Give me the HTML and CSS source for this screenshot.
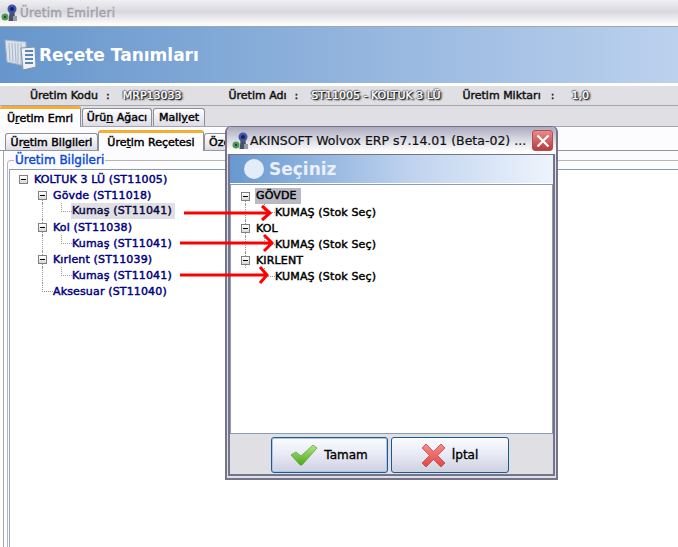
FILE: index.html
```html
<!DOCTYPE html>
<html lang="tr">
<head>
<meta charset="utf-8">
<title>Reçete Tanımları</title>
<link rel="stylesheet" href="styles.css">
</head>
<body>
<div class="window">
  <header class="titlebar">
    <svg class="app-icon" width="18" height="18" viewBox="0 0 18 18"><circle cx="11" cy="5" r="4.5" fill="#3d55b0"/><circle cx="11" cy="5" r="2" fill="#1d2440"/><path d="M8.500 9h5l1 8h-7z" fill="#4c5266"/><circle cx="4" cy="13" r="3.500" fill="#4f9a55"/><circle cx="4" cy="13" r="1.200" fill="#1e4a25"/><rect x="12" y="12" width="4" height="5" fill="#9a9aa8"/></svg>
    <span class="titlebar-text">Üretim Emirleri</span>
  </header>
  <section class="banner">
    <svg class="banner-icon" width="33" height="32" viewBox="0 0 33 32"><path d="M1 1l21 2v24L3 23z" fill="#dbe2ec" stroke="#a4b2c6"/><path d="M5 4l1 18M8 4l1 19M11 4l1 20M14 4v21M17 4v22" stroke="#aab6c8" fill="none"/><path d="M17 9l14-1 1 20-13 3z" fill="#eef1f5" stroke="#8490a0"/><path d="M21 12h8M21 16h8M21 20h8M21 24h8" stroke="#5d86ad" stroke-width="2"/></svg>
    <h1 class="banner-title">Reçete Tanımları</h1>
  </section>
  <section class="infobar">
    <span class="info-label info-a">Üretim Kodu</span><span class="info-colon">:</span><span class="info-value info-b">MRP13033</span>
    <span class="info-label info-c">Üretim Adı</span><span class="info-colon">:</span><span class="info-value info-d">ST11005 - KOLTUK 3 LÜ</span>
    <span class="info-label info-e">Üretim Miktarı</span><span class="info-colon info-colon-wide">:</span><span class="info-value info-f">1,0</span>
  </section>
  <nav class="tabs-main">
    <span class="tab tab-active tab-m1"><span>Ü<u>r</u>etim Emri</span></span>
    <span class="tab tab-m2"><span>Ürü<u>n</u> Ağacı</span></span>
    <span class="tab tab-m3"><span>Mali<u>y</u>et</span></span>
  </nav>
  <main class="page">
    <nav class="tabs-sub">
      <span class="tab tab-s1"><span>Ür<u>e</u>tim Bilgileri</span></span>
      <span class="tab tab-active tab-s2"><span>Üre<u>t</u>im Reçetesi</span></span>
      <span class="tab tab-s3"><span>Özel</span></span>
    </nav>
    <section class="panel">
      <div class="group">
        <span class="legend">Üretim Bilgileri</span>
        <div class="tree">
          <div class="row lvl0"><span class="box"></span><span class="navy">KOLTUK 3 LÜ (ST11005)</span></div>
          <div class="row lvl1"><span class="box"></span><span class="navy">Gövde (ST11018)</span></div>
          <div class="row lvl2"><span class="navy sel">Kumaş (ST11041)</span></div>
          <div class="row lvl1"><span class="box"></span><span class="navy">Kol (ST11038)</span></div>
          <div class="row lvl2"><span class="navy">Kumaş (ST11041)</span></div>
          <div class="row lvl1"><span class="box"></span><span class="navy">Kırlent (ST11039)</span></div>
          <div class="row lvl2"><span class="navy">Kumaş (ST11041)</span></div>
          <div class="row lvl1b"><span class="navy">Aksesuar (ST11040)</span></div>
        </div>
      </div>
    </section>
  </main>
</div>

<section class="dialog">
  <header class="dlg-title">
    <svg class="app-icon" width="18" height="18" viewBox="0 0 18 18"><circle cx="11" cy="5" r="4.500" fill="#3d55b0"/><circle cx="11" cy="5" r="2" fill="#1d2440"/><path d="M8.500 9h5l1 8h-7z" fill="#4c5266"/><circle cx="4" cy="13" r="3.500" fill="#4f9a55"/><circle cx="4" cy="13" r="1.200" fill="#1e4a25"/><rect x="12" y="12" width="4" height="5" fill="#9a9aa8"/></svg>
    <span class="dlg-title-text">AKINSOFT Wolvox ERP s7.14.01 (Beta-02) ...</span>
    <span class="dlg-close"><svg width="14" height="14" viewBox="0 0 14 14"><path d="M1.500 1.500l11 11M12.500 1.500l-11 11" stroke="#fff" stroke-width="2.200"/></svg></span>
  </header>
  <div class="dlg-body">
    <div class="dlg-banner"><span class="dot"></span><span class="dlg-banner-text">Seçiniz</span></div>
    <div class="dlg-tree">
      <div class="row dl0"><span class="box"></span><span class="black sel2">GÖVDE</span></div>
      <div class="row dl1"><span class="black">KUMAŞ (Stok Seç)</span></div>
      <div class="row dl0"><span class="box"></span><span class="black">KOL</span></div>
      <div class="row dl1"><span class="black">KUMAŞ (Stok Seç)</span></div>
      <div class="row dl0"><span class="box"></span><span class="black">KIRLENT</span></div>
      <div class="row dl1 dl1-last"><span class="black">KUMAŞ (Stok Seç)</span></div>
    </div>
    <div class="dlg-actions">
      <button class="btn btn-default"><svg width="28" height="22" viewBox="0 0 28 22"><defs><linearGradient id="chk" x1="0" y1="0" x2="0" y2="1"><stop offset="0" stop-color="#b6e58a"/><stop offset="1" stop-color="#4aa81a"/></linearGradient></defs><path d="M1 11l5-3 5 4L23 1l4 3-15 17h-2z" fill="url(#chk)" stroke="#5fa83a" stroke-width=".8"/></svg><span>Tamam</span></button>
      <button class="btn btn-cancel"><svg width="25" height="25" viewBox="0 0 25 25"><defs><linearGradient id="crs" x1="0" y1="0" x2="0" y2="1"><stop offset="0" stop-color="#f98a8a"/><stop offset="1" stop-color="#e24545"/></linearGradient></defs><path d="M5 1l7.500 7.500L20 1l4 4-7.500 7.500L24 20l-4 4-7.500-7.500L5 24l-4-4 7.500-7.500L1 5z" fill="url(#crs)" stroke="#b84a4a" stroke-width=".8"/></svg><span>İptal</span></button>
    </div>
  </div>
</section>

<svg class="arrows" width="678" height="547" viewBox="0 0 678 547">
  <g fill="none" stroke="#f00" stroke-width="3">
    <path d="M184 213H269M262 206l8 7-8 7"/>
    <path d="M180 243H271M264 235l8 8-8 8"/>
    <path d="M180 275H267M260 267l7 8-7 8"/>
  </g>
</svg>
</body>
</html>
```
FILE: styles.css
```css
* { box-sizing: border-box; }
html, body { margin: 0; padding: 0; background: #fff; }
body { width: 678px; height: 547px; overflow: hidden; position: relative; font-family: "DejaVu Sans", sans-serif; font-size: 11px; color: #000; }
.window { display: flex; flex-direction: column; height: 547px; }

.titlebar { height: 27px; display: flex; align-items: center; gap: 1px; padding-left: 1px; background: linear-gradient(#f0f0f3 0, #d8d8df 45%, #fbfbfc 92%); border-bottom: 1px solid #a5a5ad; }
.titlebar-text { font-size: 12px; letter-spacing: .3px; color: #a0a0a8; -webkit-text-stroke: .4px #a0a0a8; }
.app-icon { flex: none; }

.banner { height: 56px; display: flex; align-items: center; gap: 2px; padding-left: 4px; background: linear-gradient(90deg, #6696cc, #bcd1ee); }
.banner-title { margin: 0; font-size: 17px; font-weight: 700; color: #fff; }

.infobar { height: 23px; border-top: 3px solid #fff; border-bottom: 1px solid #a5a5ad; background: #e0dfe3; display: flex; align-items: center; }
.info-label, .info-colon { color: #111; -webkit-text-stroke: .45px #111; }
.info-colon { margin-left: 8px; }
.info-colon-wide { margin-left: 10px; }
.info-value { color: #fff; -webkit-text-stroke: .4px #fff; text-shadow: 1px 1px 1px #000, 2px 1px 2px #222, -1px 0 1px #333, 0 -1px 1px #444; }
.info-a { margin-left: 30px; }
.info-b { margin-left: 13px; }
.info-c { margin-left: 47px; }
.info-d { margin-left: 13px; }
.info-e { margin-left: 22px; }
.info-f { margin-left: 17px; }

.tabs-main { height: 21px; background: #e0dfe3; border-bottom: 1px solid #a5a5ad; display: flex; align-items: flex-end; gap: 1px; }
.tab { display: flex; align-items: center; justify-content: center; height: 18px; border: 1px solid #8e8f9c; border-bottom: 0; border-radius: 3px 3px 0 0; background: linear-gradient(#fff, #dcdce6); white-space: nowrap; -webkit-text-stroke: .45px #000; }
.tab-active { background: #fdfdff; border-top: 3px solid #f5ad33; position: relative; }
.tab-m1 { width: 81px; height: 21px; margin-bottom: -1px; border-left: 0; }
.tab-m2 { width: 70px; }
.tab-m3 { width: 52px; }

.page { flex: 1; display: flex; flex-direction: column; background: #fff; }
.tabs-sub { height: 24px; display: flex; align-items: flex-end; padding-left: 5px; border-bottom: 1px solid #8f9a9f; background: #fcfcff; }
.tab-s1 { width: 93px; height: 17px; }
.tab-s2 { width: 106px; height: 21px; margin-bottom: -1px; }
.tab-s3 { width: 60px; height: 17px; justify-content: flex-start; padding-left: 4px; }

.panel { flex: 1; margin-left: 3px; border-left: 1px solid #a5a5ad; padding: 9px 0 0 3px; background: #fcfcff; }
.group { height: 100%; border-left: 1px solid #b4b4bc; border-top: 1px solid #b8b4b4; border-radius: 4px 0 0 0; position: relative; padding: 8px 0 0 1px; }
.legend { position: absolute; left: 6px; top: -8px; background: #fcfcff; padding: 0 1px; color: #0a48d8; font-size: 12px; -webkit-text-stroke: .4px #0a48d8; }
.tree { height: 100%; background: #fff; border-left: 1px solid #8fa5cc; border-top: 1px solid #8a9aa8; padding-top: 1px; }

.row { height: 16px; display: flex; align-items: center; white-space: nowrap; position: relative; }
.navy { color: #000080; -webkit-text-stroke: .45px #000080; letter-spacing: .15px; }
.black { color: #000; -webkit-text-stroke: .45px #000; letter-spacing: .15px; }
.box { width: 9px; height: 9px; border: 1px solid #808080; background: linear-gradient(#fff, #d8d8d8); margin-right: 6px; position: relative; flex: none; z-index: 1; }
.box::after { content: ""; position: absolute; left: 1px; top: 3px; width: 5px; height: 1px; background: #000; }
.lvl0 { padding-left: 9px; }
.lvl1 { padding-left: 28px; }
.lvl1b { padding-left: 43px; }
.lvl2 { padding-left: 62px; }
.lvl1::before, .lvl2::after { content: ""; position: absolute; left: 32px; top: 0; height: 16px; border-left: 1px dotted #999; }
.lvl1:nth-child(2)::before { top: 6px; height: 10px; }
.lvl2::before { content: ""; position: absolute; left: 51px; top: 0; width: 10px; height: 8px; border-left: 1px dotted #999; border-bottom: 1px dotted #999; }
.lvl1b::before { content: ""; position: absolute; left: 32px; top: 0; width: 10px; height: 8px; border-left: 1px dotted #999; border-bottom: 1px dotted #999; }
.sel { background: #e0dfe3; color: #0a0a40; -webkit-text-stroke-color: #0a0a40; height: 16px; line-height: 16px; padding: 0 3px 0 1px; margin-left: -1px; }

.dialog { position: absolute; left: 225px; top: 126px; width: 333px; height: 354px; border: 2px solid #74758d; border-top-width: 1px; border-radius: 6px 6px 0 0; background: #e0dfe3; display: flex; flex-direction: column; padding: 0 1px 2px; }
.dlg-title { height: 27px; display: flex; align-items: center; margin: 0 -1px; padding: 0 3px 0 5px; background: linear-gradient(#aaaabd, #d3d3de 40%, #fdfdfe 88%); border-radius: 5px 5px 0 0; }
.dlg-title-text { flex: 1; font-size: 12.5px; color: #111; -webkit-text-stroke: .2px #111; white-space: nowrap; overflow: hidden; }
.dlg-close { width: 21px; height: 21px; border-radius: 3px; background: linear-gradient(#e88a88, #b83c3e); border: 1px solid #b05050; display: flex; align-items: center; justify-content: center; flex: none; }
.dlg-body { flex: 1; display: flex; flex-direction: column; border: 1px solid #74758d; border-width: 1px 2px 2px; }
.dlg-banner { height: 29px; display: flex; align-items: center; gap: 5px; padding-left: 14px; background: linear-gradient(90deg, #6898cf, #bed2ee 55%, #eef4fc); border-bottom: 1px solid #fff; }
.dot { width: 20px; height: 20px; border-radius: 50%; background: #e3ecf9; }
.dlg-banner-text { font-size: 17px; font-weight: 700; color: #e9f0fb; }
.dlg-tree { height: 250px; flex: none; background: #fff; border: 1px solid #8c9bb0; padding-top: 3px; }
.dl0 { padding-left: 10px; }
.dl1 { padding-left: 44px; }
.dl0 .box { margin-right: 6px; }
.dl0::before, .dl1::after { content: ""; position: absolute; left: 14px; top: 0; height: 16px; border-left: 1px dotted #999; }
.dl0:first-child::before { top: 6px; height: 10px; }
.dl1-last::after { display: none; }
.dl1::before { content: ""; position: absolute; left: 33px; top: 0; width: 10px; height: 8px; border-left: 1px dotted #999; border-bottom: 1px dotted #999; }
.sel2 { background: #b9b9c3; height: 16px; line-height: 16px; padding: 0 4px 0 1px; margin-left: -1px; }
.dlg-actions { flex: 1; display: flex; justify-content: center; gap: 3px; padding: 3px 4px 0 0; }
.btn { width: 118px; height: 36px; border: 1px solid #1d5a8e; border-radius: 3px; background: linear-gradient(#fcfcfe, #e7e9f5 50%, #cfd0e0); display: flex; align-items: center; justify-content: center; gap: 6px; font: 400 12px "DejaVu Sans", sans-serif; -webkit-text-stroke: .35px #000; color: #000; padding: 0; }
.btn-default { width: 117px; box-shadow: inset 0 0 0 1px #a9c7ee; }

.arrows { position: absolute; left: 0; top: 0; pointer-events: none; }
```
